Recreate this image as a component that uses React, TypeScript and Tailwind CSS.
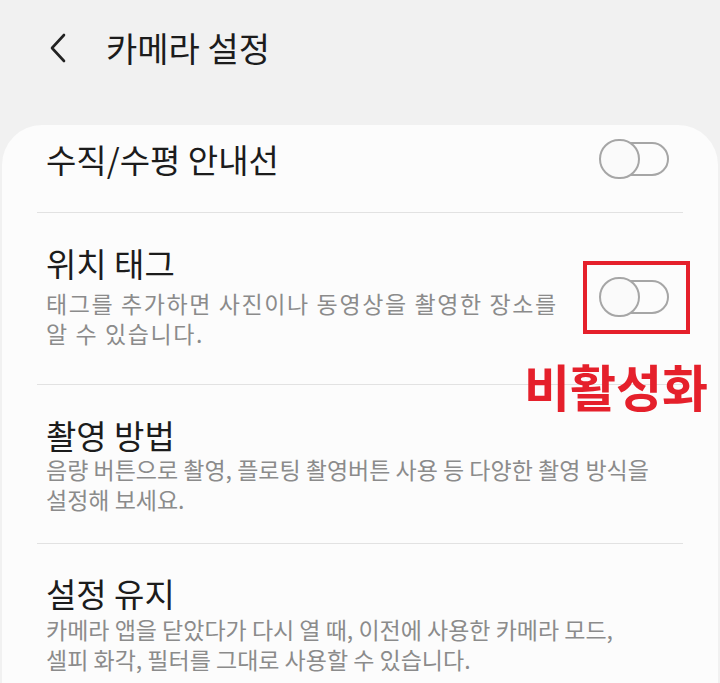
import React from "react";

const FONT = { fontFamily: '"Noto Sans CJK KR", "Noto Sans", sans-serif' };

function Toggle({ highlighted = false }: { highlighted?: boolean }) {
  return (
    <div className="relative w-[70px] h-[40px] shrink-0">
      {/* track */}
      <div className="absolute right-0 top-[3px] w-[58px] h-[34px] rounded-full border-2 border-[#a6a6a6]" />
      {/* thumb */}
      <div className="absolute left-0 top-0 w-[41px] h-[40px] rounded-full border-2 border-[#a6a6a6] bg-[#fafafa]" />
      {highlighted && (
        <>
          <div className="absolute -left-[16px] -right-[21px] -top-[16px] -bottom-[17px] border-4 border-[#e5202b]" />
          <div className="absolute left-[-75px] top-[81px] whitespace-nowrap text-[50px] leading-[54px] font-bold text-[#e5202b]">
            비활성화
          </div>
        </>
      )}
    </div>
  );
}

interface RowProps {
  title: string;
  lines?: string[];
  toggle?: boolean;
  highlighted?: boolean;
  className?: string;
  subClassName?: string;
}

function SettingRow({ title, lines, toggle, highlighted, className = "", subClassName = "" }: RowProps) {
  return (
    <div className={`flex items-center justify-between pl-[44px] pr-[49px] ${className}`}>
      <div className="flex flex-col">
        <div className="text-[33px] leading-[36px] text-[#1c1c1c]">{title}</div>
        {lines && (
          <div className={`text-[23px] leading-[30px] text-[#8b8b8b] ${subClassName}`}>
            {lines.map((l) => (
              <div key={l} className="whitespace-nowrap">{l}</div>
            ))}
          </div>
        )}
      </div>
      {toggle && <Toggle highlighted={highlighted} />}
    </div>
  );
}

export default function App() {
  return (
    <div className="w-[720px] h-[683px] overflow-hidden bg-[#f1f1f1] flex flex-col" style={FONT}>
      {/* Header */}
      <div className="h-[125px] shrink-0 flex items-start pt-[30px]">
        <div className="flex items-center h-[36px] pl-[48px]">
          <svg width="20" height="30" viewBox="0 0 20 30" fill="none">
            <polyline points="16,2 4,15 16,28" stroke="#222" strokeWidth="2.6" strokeLinecap="round" strokeLinejoin="round" />
          </svg>
          <span className="ml-[38px] text-[34px] leading-[36px] text-[#1c1c1c]">카메라 설정</span>
        </div>
      </div>

      {/* Card */}
      <div className="flex-1 mx-[2px] rounded-t-[40px] bg-[#fcfcfc]">
        <SettingRow title="수직/수평 안내선" toggle className="h-[87px] pb-[20px]" />
        <div className="mx-[35px] h-px bg-[#e2e2e2]" />
        <SettingRow
          title="위치 태그"
          lines={["태그를 추가하면 사진이나 동영상을 촬영한 장소를", "알 수 있습니다."]}
          toggle
          highlighted
          className="pt-[32px] pb-[36px]"
          subClassName="mt-[7px] tracking-[1.6px]"
        />
        <div className="mx-[35px] h-px bg-[#e2e2e2]" />
        <SettingRow
          title="촬영 방법"
          lines={["음량 버튼으로 촬영, 플로팅 촬영버튼 사용 등 다양한 촬영 방식을", "설정해 보세요."]}
          className="pt-[32px] pb-[29px]"
          subClassName="mt-[1px]"
        />
        <div className="mx-[35px] h-px bg-[#e2e2e2]" />
        <SettingRow
          title="설정 유지"
          lines={["카메라 앱을 닫았다가 다시 열 때, 이전에 사용한 카메라 모드,", "셀피 화각, 필터를 그대로 사용할 수 있습니다."]}
          className="pt-[31px]"
          subClassName="mt-[3px]"
        />
      </div>
    </div>
  );
}
